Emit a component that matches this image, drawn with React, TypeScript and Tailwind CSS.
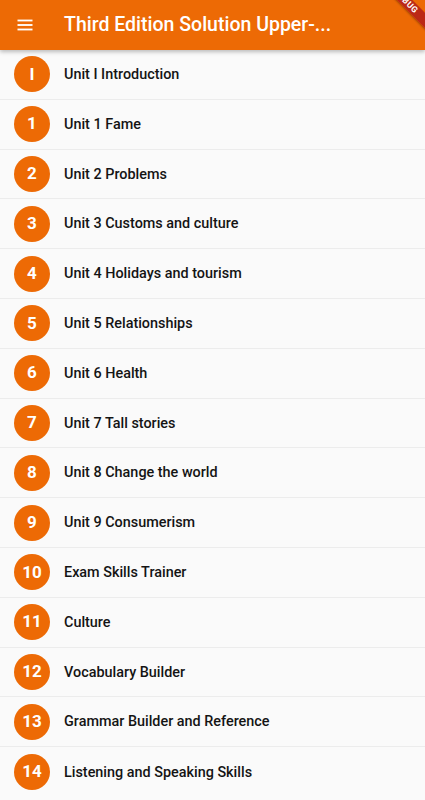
import React from 'react';

const units = [
  { badge: 'I', title: 'Unit I Introduction' },
  { badge: '1', title: 'Unit 1 Fame' },
  { badge: '2', title: 'Unit 2 Problems' },
  { badge: '3', title: 'Unit 3 Customs and culture' },
  { badge: '4', title: 'Unit 4 Holidays and tourism' },
  { badge: '5', title: 'Unit 5 Relationships' },
  { badge: '6', title: 'Unit 6 Health' },
  { badge: '7', title: 'Unit 7 Tall stories' },
  { badge: '8', title: 'Unit 8 Change the world' },
  { badge: '9', title: 'Unit 9 Consumerism' },
  { badge: '10', title: 'Exam Skills Trainer' },
  { badge: '11', title: 'Culture' },
  { badge: '12', title: 'Vocabulary Builder' },
  { badge: '13', title: 'Grammar Builder and Reference' },
  { badge: '14', title: 'Listening and Speaking Skills' },
];

const MenuIcon = () => (
  <svg width="20" height="20" viewBox="0 0 24 24" fill="white">
    <rect x="3" y="5.5" width="18" height="2.2" />
    <rect x="3" y="10.9" width="18" height="2.2" />
    <rect x="3" y="16.3" width="18" height="2.2" />
  </svg>
);

export default function App() {
  return (
    <div className="relative w-[425px] h-[800px] overflow-hidden bg-[#fafafa] font-['Roboto',sans-serif]">
      {/* App bar */}
      <header className="relative z-10 h-[50px] bg-[#ed6a05] flex items-center shadow-[0_2px_4px_rgba(0,0,0,0.25)]">
        <button className="w-[64px] h-full flex items-center pl-[15px]">
          <MenuIcon />
        </button>
        <h1 className="text-white text-[19.5px] font-medium whitespace-nowrap">
          Third Edition Solution Upper-...
        </h1>
      </header>

      {/* Unit list */}
      <ul className="flex flex-col">
        {units.map((u) => (
          <li
            key={u.title}
            className="h-[49.8px] flex items-center border-b border-[#ececec] last:border-b-0"
          >
            <div className="ml-[14px] w-[36px] h-[36px] rounded-full bg-[#ed6a05] flex items-center justify-center text-white text-[17px] font-bold">
              {u.badge}
            </div>
            <span className="ml-[14px] pt-[1px] text-[14.4px] font-medium text-[#141414]">{u.title}</span>
          </li>
        ))}
      </ul>

      {/* Debug banner */}
      <div className="absolute z-20 left-[366px] top-[-4px] w-[80px] h-[11px] rotate-45 bg-[rgba(170,20,28,0.75)] flex items-center justify-center shadow-[0_1px_2px_rgba(0,0,0,0.3)]">
        <span className="text-white text-[8.5px] font-bold tracking-[0.5px] leading-none">DEBUG</span>
      </div>
    </div>
  );
}
